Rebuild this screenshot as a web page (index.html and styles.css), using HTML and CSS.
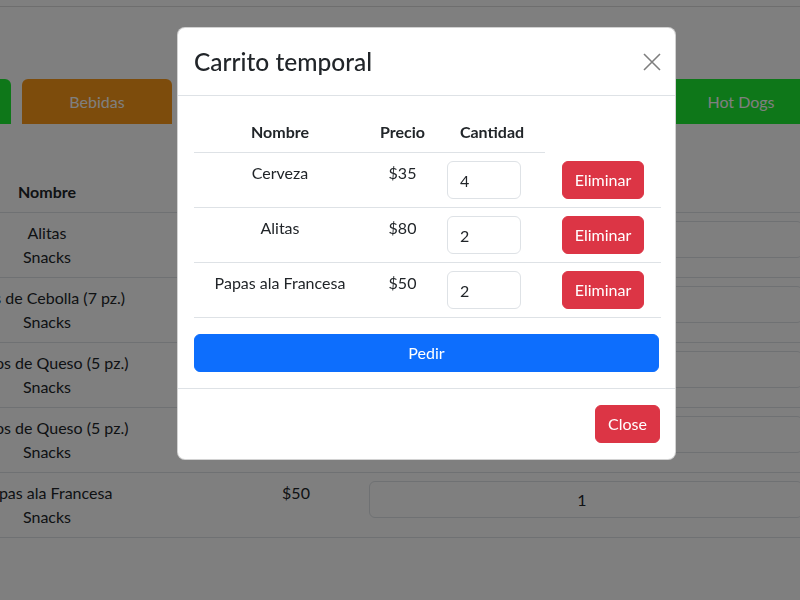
FILE: index.html
```html
<!DOCTYPE html>
<html lang="es">
<head>
<meta charset="utf-8">
<title>Carrito temporal</title>
<link rel="stylesheet" href="styles.css">
</head>
<body>
<div class="page">
  <div class="topbar"></div>
  <div class="cats">
    <button class="cat cat-green">Snacks</button>
    <button class="cat cat-orange">Bebidas</button>
    <button class="cat cat-blue">Postres</button>
    <button class="cat cat-red">Hamburguesas</button>
    <button class="cat cat-purple">Pizzas</button>
    <button class="cat cat-green">Hot Dogs</button>
  </div>
  <div class="list">
    <table class="menu">
      <colgroup><col class="mc1"><col class="mc2"><col class="mc3"></colgroup>
      <thead>
        <tr><th>Nombre</th><th>Precio</th><th>Cantidad</th></tr>
      </thead>
      <tbody>
        <tr><td>Alitas<br>Snacks</td><td>$80</td><td><input class="qty" value="1"></td></tr>
        <tr><td>Aros de Cebolla (7 pz.)<br>Snacks</td><td>$45</td><td><input class="qty" value="1"></td></tr>
        <tr><td>Dedos de Queso (5 pz.)<br>Snacks</td><td>$55</td><td><input class="qty" value="1"></td></tr>
        <tr><td>Dedos de Queso (5 pz.)<br>Snacks</td><td>$55</td><td><input class="qty" value="1"></td></tr>
        <tr><td>Papas ala Francesa<br>Snacks</td><td>$50</td><td><input class="qty" value="1"></td></tr>
      </tbody>
    </table>
  </div>
</div>

<div class="backdrop"></div>

<div class="modal">
  <div class="modal-header">
    <h4 class="modal-title">Carrito temporal</h4>
    <button class="btn-close" aria-label="Close">
      <svg width="18" height="18" viewBox="0 0 18 18"><path d="M1 1L17 17M17 1L1 17" stroke="#000" stroke-width="1.6" fill="none"/></svg>
    </button>
  </div>
  <div class="modal-body">
    <table class="cart">
      <colgroup><col class="c1"><col class="c2"><col class="c3"><col class="c4"></colgroup>
      <thead>
        <tr><th>Nombre</th><th>Precio</th><th>Cantidad</th></tr>
      </thead>
      <tbody>
        <tr><td>Cerveza</td><td>$35</td><td class="left"><input class="cart-qty" value="4"></td><td><button class="btn btn-danger">Eliminar</button></td></tr>
        <tr><td>Alitas</td><td>$80</td><td class="left"><input class="cart-qty" value="2"></td><td><button class="btn btn-danger">Eliminar</button></td></tr>
        <tr><td>Papas ala Francesa</td><td>$50</td><td class="left"><input class="cart-qty" value="2"></td><td><button class="btn btn-danger">Eliminar</button></td></tr>
      </tbody>
    </table>
    <button class="btn btn-primary btn-block">Pedir</button>
  </div>
  <div class="modal-footer">
    <button class="btn btn-danger">Close</button>
  </div>
</div>
</body>
</html>
```

FILE: styles.css
```css
* { box-sizing: border-box; }
html, body {
  margin: 0;
  padding: 0;
  width: 800px;
  height: 600px;
  overflow: hidden;
  background: #fff;
  font-family: "Lato", "Liberation Sans", sans-serif;
  font-size: 16px;
  line-height: 24px;
  color: #212529;
}
.page {
  width: 800px;
  height: 600px;
  overflow: hidden;
}
.topbar {
  height: 7px;
  border-bottom: 1px solid #dcdcdc;
}
.cats {
  display: flex;
  gap: 11px;
  margin: 72px 0 0 -139px;
}
.cat {
  flex: 0 0 150px;
  height: 45px;
  border: none;
  color: #fff;
  font: inherit;
}
.cat-green { background: #1cee32; border-radius: 6px 6px 0 0; }
.cat-orange { background: #fa9818; border-radius: 6px 6px 0 0; }
.cat-blue { background: #0d6efd; }
.cat-red { background: #dc3545; }
.cat-purple { background: #6f42c1; }

.list {
  margin-top: 48px;
  margin-left: -137px;
}
.menu {
  border-collapse: collapse;
  table-layout: fixed;
  width: 960px;
}
.mc1 { width: 368px; }
.mc2 { width: 130px; }
.mc3 { width: 462px; }
.menu th, .menu td {
  padding: 8px;
  text-align: center;
  vertical-align: top;
  border-bottom: 1px solid #dee2e6;
}
.menu th { font-weight: 700; }
.qty {
  display: block;
  width: 434px;
  height: 37px;
  border: 1px solid #dee2e6;
  border-radius: 6px;
  font: inherit;
  color: #212529;
  text-align: center;
  padding: 6px 20px 6px 12px;
}

.backdrop {
  position: fixed;
  inset: 0;
  background: rgba(0, 0, 0, 0.5);
}

.modal {
  position: fixed;
  left: 177px;
  top: 27px;
  width: 499px;
  background: #fff;
  border: 1px solid rgba(0, 0, 0, 0.175);
  border-radius: 8px;
}
.modal-header {
  display: flex;
  align-items: center;
  justify-content: space-between;
  padding: 16px;
  border-bottom: 1px solid #dee2e6;
}
.modal-title {
  margin: 0;
  font-size: 24.5px;
  line-height: 35px;
  font-weight: 500;
}
.btn-close {
  width: 18px;
  height: 18px;
  padding: 0;
  margin-right: -2px;
  border: none;
  background: none;
  opacity: 0.5;
  display: flex;
}
.modal-body {
  padding: 16px;
}
.cart {
  width: 100%;
  border-collapse: collapse;
  table-layout: fixed;
  margin-bottom: 16px;
}
.c1 { width: 172px; }
.c2 { width: 73px; }
.c3 { width: 106px; }
.c4 { width: 116px; }
.cart th, .cart td {
  padding: 8px;
  text-align: center;
  vertical-align: top;
  border-bottom: 1px solid #dee2e6;
}
.cart th { font-weight: 700; }
.cart td.left { text-align: left; }
.cart-qty {
  display: block;
  width: 74px;
  height: 38px;
  border: 1px solid #dee2e6;
  border-radius: 6px;
  padding: 6px 12px;
  font: inherit;
  color: #212529;
}
.btn {
  height: 38px;
  padding: 6px 12px;
  border: 1px solid transparent;
  border-radius: 6px;
  font: inherit;
  color: #fff;
}
.btn-danger { background: #dc3545; border-color: #dc3545; }
.btn-primary { background: #0d6efd; border-color: #0d6efd; }
.btn-block { display: block; width: 100%; }
.modal-footer {
  display: flex;
  justify-content: flex-end;
  padding: 12px 11px 12px 12px;
  border-top: 1px solid #dee2e6;
}
.modal-footer .btn { margin: 4px; }
```
